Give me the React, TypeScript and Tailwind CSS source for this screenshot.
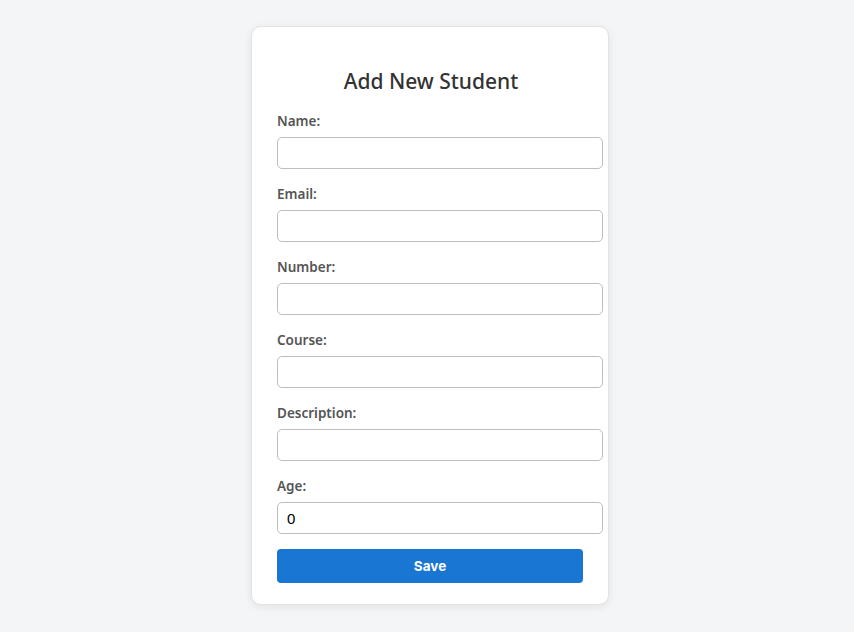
const fields = ["Name", "Email", "Number", "Course", "Description", "Age"];

export default function App() {
  return (
    <div className="min-h-screen bg-[#f4f5f7] flex justify-center pt-[26px] pl-[6px] font-['Noto_Sans',sans-serif]">
      <div className="w-[358px] h-[579px] bg-white border border-[#e2e2e2] rounded-[10px] shadow-[0_2px_8px_rgba(0,0,0,0.08)] pl-[25px] pr-[23px] pt-[38px]">
        <h2 className="text-center text-[21px] font-medium text-[#333] leading-8 mb-[14px]">Add New Student</h2>
        <form className="flex flex-col">
          {fields.map((f) => (
            <div key={f} className="flex flex-col mb-[15px]">
              <label className="text-[13.5px] font-semibold text-[#555] leading-5 mb-[6px]">{f}:</label>
              <input
                type="text"
                defaultValue={f === "Age" ? "0" : ""}
                className="w-[326px] h-8 border border-[#bdbdbd] rounded-[5px] px-[9px] text-[15px] text-black font-['Liberation_Sans',Arial,sans-serif] outline-none"
              />
            </div>
          ))}
          <button
            type="button"
            className="w-[306px] h-[34px] bg-[#1976d2] text-white text-[13.5px] font-bold rounded-[4px] font-['Inter',sans-serif]"
          >
            Save
          </button>
        </form>
      </div>
    </div>
  );
}
